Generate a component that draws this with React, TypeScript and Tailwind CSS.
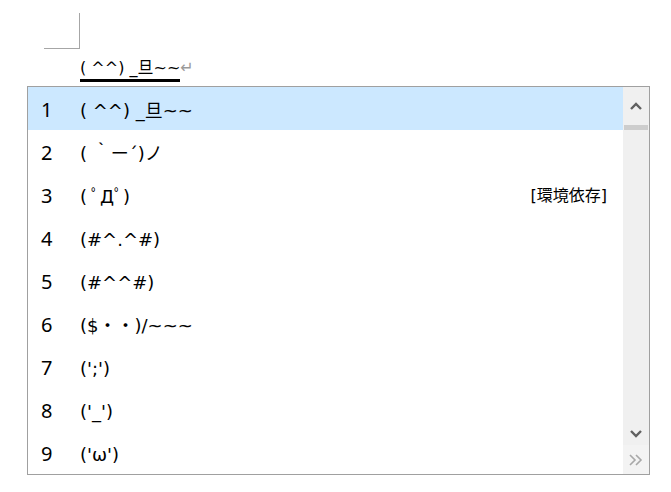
import { FC } from "react";

const candidates = [
  { text: "( ^^) _旦~~", note: "" },
  { text: "( ｀ー´)ノ", note: "" },
  { text: "( ﾟДﾟ)", note: "[環境依存]" },
  { text: "(#^.^#)", note: "" },
  { text: "(#^^#)", note: "" },
  { text: "($・・)/~~~", note: "" },
  { text: "(';')", note: "" },
  { text: "('_')", note: "" },
  { text: "('ω')", note: "" },
];

const font = { fontFamily: '"DejaVu Sans", "Noto Sans CJK JP", sans-serif' };
const numFont = { fontFamily: '"Noto Sans", "Open Sans", sans-serif' };

const App: FC = () => {
  return (
    <div className="h-[492px] w-[671px] overflow-hidden bg-white" style={font}>
      {/* page corner mark */}
      <div className="ml-[44px] mt-[13px] h-[36px] w-[36px] border-r border-b border-[#a6a6a6]" />

      {/* composing text */}
      <div className="ml-[80px] mt-[8px] flex h-[29px] items-start text-[16px] leading-[21px] text-black">
        <span className="border-b-[3px] border-black pb-[1px]">( ^^) _旦~~</span>
        <span className="text-[#9a9a9a]">↵</span>
      </div>

      {/* candidate window */}
      <div className="ml-[27px] flex h-[389px] w-[623px] border border-[#a0a0a0]">
        <div className="flex-1">
          {candidates.map((c, i) => (
            <div
              key={i}
              className={`flex h-[43px] items-center pt-[3px] text-[18px] text-black ${
                i === 0 ? "bg-[#cce8ff]" : ""
              }`}
            >
              <span className="w-[52px] pl-[13px] text-[20px]" style={numFont}>
                {i + 1}
              </span>
              <span className="flex-1">{c.text}</span>
              {c.note && <span className="pr-[16px] text-[16px]">{c.note}</span>}
            </div>
          ))}
        </div>

        {/* scrollbar */}
        <div className="flex w-[26px] flex-col bg-[#f0f0f0]">
          <div className="flex h-[38px] items-center justify-center">
            <svg width="12" height="8" viewBox="0 0 12 8">
              <path d="M1 7 L6 2 L11 7" fill="none" stroke="#606060" strokeWidth="2.4" />
            </svg>
          </div>
          <div className="mx-px h-[5px] bg-[#cdcdcd]" />
          <div className="flex-1" />
          <div className="flex h-[22px] items-center justify-center">
            <svg width="12" height="8" viewBox="0 0 12 8">
              <path d="M1 1 L6 6 L11 1" fill="none" stroke="#606060" strokeWidth="2.4" />
            </svg>
          </div>
          <div className="flex h-[29px] items-center justify-center bg-[#f3f3f3]">
            <svg width="16" height="12" viewBox="0 0 16 12">
              <path d="M2 1 L7 6 L2 11 M8 1 L13 6 L8 11" fill="none" stroke="#a8a8a8" strokeWidth="1.6" />
            </svg>
          </div>
        </div>
      </div>
    </div>
  );
};

export default App;
